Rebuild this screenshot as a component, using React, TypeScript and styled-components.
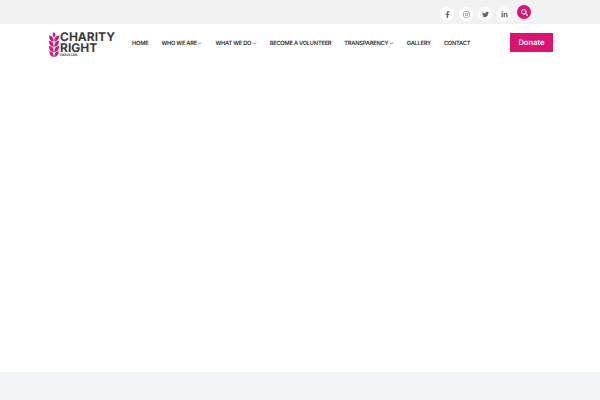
import React from 'react'
import styled, { createGlobalStyle } from 'styled-components'
import { FaFacebookF, FaInstagram, FaTwitter, FaLinkedinIn, FaSearch } from 'react-icons/fa'
import { FiChevronDown } from 'react-icons/fi'

const GlobalStyle = createGlobalStyle`
  html, body { margin: 0; padding: 0; background: #fff; }
  body { font-family: Inter, "Liberation Sans", sans-serif; text-rendering: geometricPrecision; }
`

const Page = styled.div`
  width: 600px;
  height: 400px;
  display: flex;
  flex-direction: column;
  overflow: hidden;
`

const TopBar = styled.div`
  height: 24px;
  background: #f2f2f2;
  display: flex;
  justify-content: flex-end;
  align-items: flex-start;
  padding: 5px 69px 0 0;
  box-sizing: border-box;
  gap: 5px;
`

const Social = styled.a`
  width: 14px;
  height: 14px;
  margin-top: 2px;
  border-radius: 50%;
  background: #fff;
  color: #666;
  font-size: 7px;
  display: flex;
  align-items: center;
  justify-content: center;
`

const SearchButton = styled.button`
  width: 14px;
  height: 14px;
  border: 0;
  padding: 0;
  margin-left: 1px;
  border-radius: 50%;
  background: #e0106f;
  color: #fff;
  font-size: 7px;
  display: flex;
  align-items: center;
  justify-content: center;
`

const Header = styled.header`
  height: 38px;
  background: #fff;
  display: flex;
  align-items: center;
  padding: 0 47px 0 49px;
`

const Logo = styled.div`
  flex: none;
  width: 83px;
  margin-top: 2px;
  display: flex;
  align-items: center;
  gap: 1px;
`

const LogoText = styled.div`
  display: flex;
  flex-direction: column;
  color: #3a3a3c;
  font-weight: 700;
  font-size: 12px;
  line-height: 11px;
`

const LogoSmall = styled.span`
  font-size: 3.5px;
  line-height: 5px;
  font-weight: 600;
`

const Nav = styled.nav`
  display: flex;
  align-items: center;
  gap: 13px;
  flex: 1;
`

const NavItem = styled.a`
  display: flex;
  align-items: center;
  font-size: 5.7px;
  font-weight: 600;
  letter-spacing: -0.23px;
  color: #333;
  white-space: nowrap;

  svg {
    font-size: 5px;
    margin-left: 0.5px;
    stroke-width: 3;
  }
`

const Donate = styled.a`
  flex: none;
  width: 43px;
  height: 19px;
  margin-top: -1px;
  background: #e0106f;
  color: #fff;
  font-size: 7.6px;
  font-weight: 600;
  display: flex;
  align-items: center;
  justify-content: center;
`

const Main = styled.main`
  flex: 1;
  background: #fff;
`

const Footer = styled.footer`
  height: 28px;
  background: #f3f4f8;
`

const WheatLogo = () => (
  <svg width="10" height="25" viewBox="0 0 10 25" fill="#d01a78">
    <path d="M5 0 C6.8 1.5 6.8 4 5 5.6 C3.2 4 3.2 1.5 5 0Z" />
    <path d="M0 3.6 C3 3.8 4.6 5.2 4.7 9.6 C1.6 9.6 0 7.2 0 3.6Z" />
    <path d="M10 3.6 C7 3.8 5.4 5.2 5.3 9.6 C8.4 9.6 10 7.2 10 3.6Z" />
    <path d="M0 8.8 C3 9 4.6 10.4 4.7 14.8 C1.6 14.8 0 12.4 0 8.8Z" />
    <path d="M10 8.8 C7 9 5.4 10.4 5.3 14.8 C8.4 14.8 10 12.4 10 8.8Z" />
    <path d="M0 14 C3 14.2 4.6 15.6 4.7 20 C1.6 20 0 17.6 0 14Z" />
    <path d="M10 14 C7 14.2 5.4 15.6 5.3 20 C8.4 20 10 17.6 10 14Z" />
    <path d="M0.3 19.2 C3 19.4 4.6 20.8 4.7 25 C1.8 24.8 0.3 22.6 0.3 19.2Z" />
    <path d="M9.7 19.2 C7 19.4 5.4 20.8 5.3 25 C8.2 24.8 9.7 22.6 9.7 19.2Z" />
  </svg>
)

const links = [
  { label: 'HOME' },
  { label: 'WHO WE ARE', menu: true },
  { label: 'WHAT WE DO', menu: true },
  { label: 'BECOME A VOLUNTEER' },
  { label: 'TRANSPARENCY', menu: true },
  { label: 'GALLERY' },
  { label: 'CONTACT' },
]

export default function App() {
  return (
    <Page>
      <GlobalStyle />
      <TopBar>
        <Social><FaFacebookF /></Social>
        <Social><FaInstagram /></Social>
        <Social><FaTwitter /></Social>
        <Social><FaLinkedinIn /></Social>
        <SearchButton><FaSearch /></SearchButton>
      </TopBar>
      <Header>
        <Logo>
          <WheatLogo />
          <LogoText>
            <span>CHARITY</span>
            <span>RIGHT</span>
            <LogoSmall>PAKISTAN</LogoSmall>
          </LogoText>
        </Logo>
        <Nav>
          {links.map((l) => (
            <NavItem key={l.label}>
              {l.label}
              {l.menu && <FiChevronDown />}
            </NavItem>
          ))}
        </Nav>
        <Donate>Donate</Donate>
      </Header>
      <Main />
      <Footer />
    </Page>
  )
}
